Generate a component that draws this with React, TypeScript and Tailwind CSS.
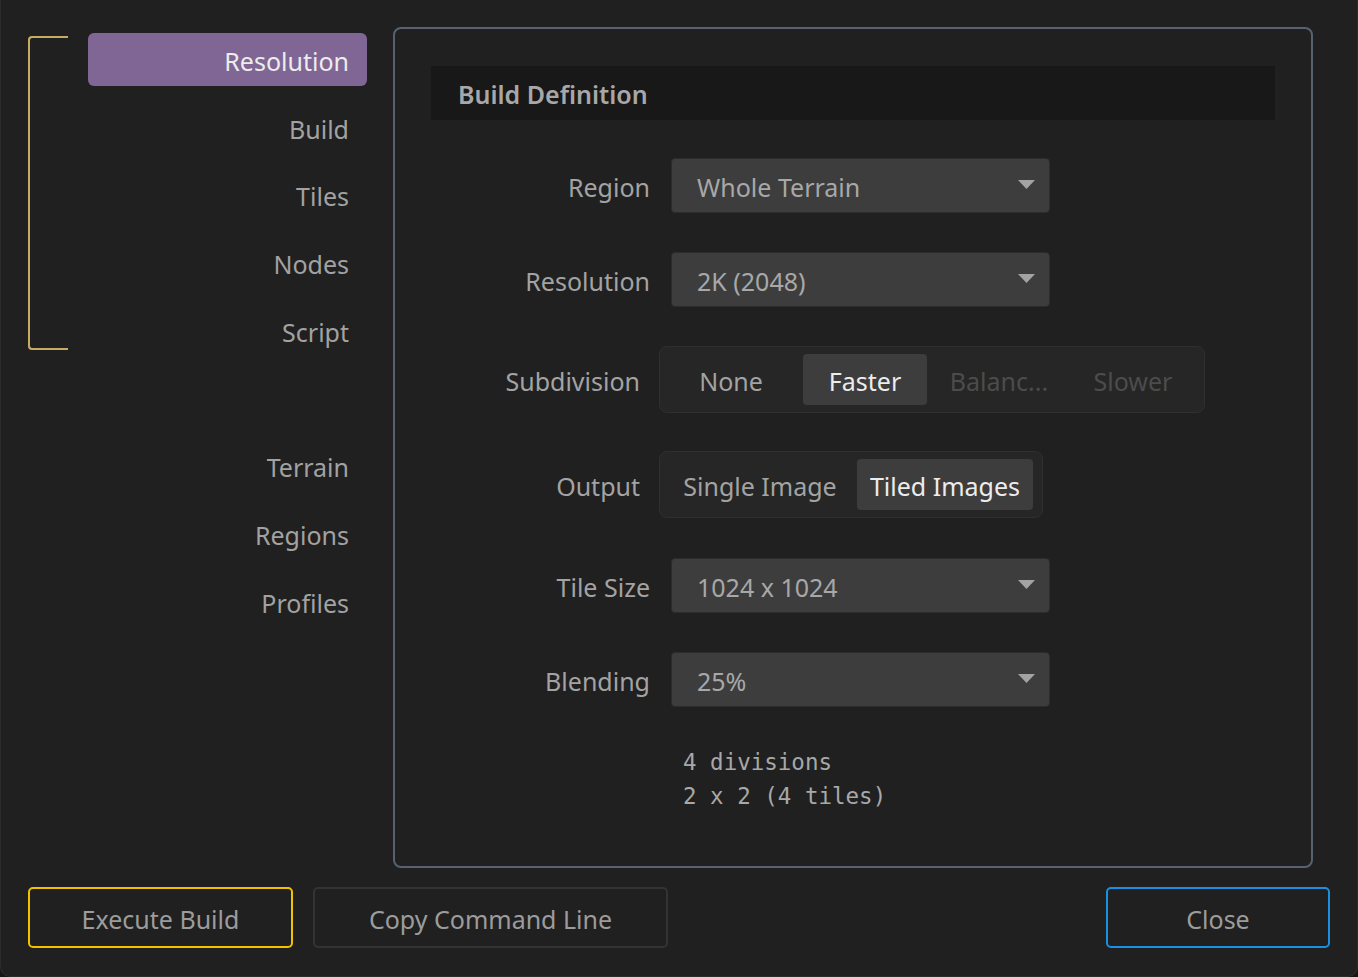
const ui = { fontFamily: '"Noto Sans", "Open Sans", sans-serif' };
const mono = { fontFamily: '"DejaVu Sans Mono", "Liberation Mono", monospace' };

const navTop = ["Resolution", "Build", "Tiles", "Nodes", "Script"];
const navBottom = ["Terrain", "Regions", "Profiles"];

function NavItem({ label, active }: { label: string; active?: boolean }) {
  return (
    <div
      className={
        "h-[53px] flex items-center justify-end pr-[18px] pt-[4px] rounded-[6px] text-[25px] " +
        (active ? "bg-[#7f6695] text-[#ececec]" : "text-[#a2a2a2]")
      }
    >
      {label}
    </div>
  );
}

function Caret() {
  return (
    <svg width="17" height="9" viewBox="0 0 17 9" className="mb-[3px]">
      <path d="M0 0 L17 0 L8.5 9 Z" fill="#a3a3a3" />
    </svg>
  );
}

function Dropdown({ value }: { value: string }) {
  return (
    <div className="w-[379px] h-[55px] bg-[#3d3d3d] border border-[#2c2c2c] rounded-[4px] flex items-center justify-between pl-[25px] pr-[14px] text-[25px] text-[#a8a8a8]">
      <span className="pt-[4px]">{value}</span>
      <Caret />
    </div>
  );
}

function Row({ label, children, seg }: { label: string; children: React.ReactNode; seg?: boolean }) {
  return (
    <div className="flex items-center">
      <div
        className={
          "text-right text-[25px] text-[#a3a3a3] pt-[4px] " +
          (seg ? "w-[209px] mr-[19px]" : "w-[219px] mr-[21px]")
        }
      >
        {label}
      </div>
      {children}
    </div>
  );
}

function Segmented({ options, selected, disabled = [], widths, gap }: { options: string[]; selected: number; disabled?: number[]; widths: number[]; gap: number }) {
  return (
    <div
      className="h-[67px] bg-[#262626] border border-[#2f2f2f] rounded-[8px] flex items-center px-[9px]"
      style={{ gap }}
    >
      {options.map((o, i) => (
        <div
          key={o}
          className={
            "h-[51px] flex items-center justify-center pt-[4px] rounded-[4px] text-[25px] " +
            (i === selected
              ? "bg-[#3d3d3d] text-[#ececec]"
              : disabled.includes(i)
              ? "text-[#4c4c4c]"
              : "text-[#a3a3a3]")
          }
          style={{ width: widths[i] }}
        >
          {o}
        </div>
      ))}
    </div>
  );
}

function Btn({ label, border, width }: { label: string; border: string; width: string }) {
  return (
    <div className={"h-[61px] rounded-[5px] flex items-center justify-center pt-[4px] text-[25px] text-[#9c9c9c] " + border + " " + width}>
      {label}
    </div>
  );
}

export default function App() {
  return (
    <div className="w-[1358px] h-[977px] bg-[#161616]" style={ui}>
      <div className="w-full h-full bg-[#202020] rounded-b-[10px] border-b border-x border-[#2c2c2c] flex flex-col pt-[27px] pl-[27px] pr-[27px]">
        <div className="flex">
          {/* sidebar */}
          <div className="w-[365px] flex">
            <div className="w-[40px] h-[314px] mt-[9px] border-l-2 border-t-2 border-b-2 border-[#c6ac62] rounded-l-[4px]" />
            <div className="ml-[20px] w-[279px] mt-[6px] flex flex-col gap-[14.75px]">
              {navTop.map((n, i) => (
                <NavItem key={n} label={n} active={i === 0} />
              ))}
              <div className="h-[53px]" />
              {navBottom.map((n) => (
                <NavItem key={n} label={n} />
              ))}
            </div>
          </div>

          {/* main panel */}
          <div className="w-[920px] h-[841px] border-2 border-[#56636f] rounded-[8px] px-[36px] pt-[37px]">
            <div className="h-[54px] bg-[#181818] flex items-center pl-[27px] pt-[4px] text-[25px] font-semibold text-[#a8a8a8]">
              Build Definition
            </div>
            <div className="flex flex-col mt-[38px]">
              <Row label="Region">
                <Dropdown value="Whole Terrain" />
              </Row>
              <div className="h-[39px]" />
              <Row label="Resolution">
                <Dropdown value="2K (2048)" />
              </Row>
              <div className="h-[39px]" />
              <Row label="Subdivision" seg>
                <Segmented
                  options={["None", "Faster", "Balanc...", "Slower"]}
                  selected={1}
                  disabled={[2, 3]}
                  widths={[124, 124, 124, 124]}
                  gap={10}
                />
              </Row>
              <div className="h-[38px]" />
              <Row label="Output" seg>
                <Segmented
                  options={["Single Image", "Tiled Images"]}
                  selected={1}
                  widths={[182, 176]}
                  gap={6}
                />
              </Row>
              <div className="h-[40px]" />
              <Row label="Tile Size">
                <Dropdown value="1024 x 1024" />
              </Row>
              <div className="h-[39px]" />
              <Row label="Blending">
                <Dropdown value="25%" />
              </Row>
              <div className="ml-[252px] mt-[38px] text-[22.5px] leading-[34px] text-[#a8a8a8]" style={mono}>
                <div>4 divisions</div>
                <div>2 x 2 (4 tiles)</div>
              </div>
            </div>
          </div>
        </div>

        {/* buttons */}
        <div className="flex mt-[19px] items-center">
          <Btn label="Execute Build" border="border-2 border-[#f2c200]" width="w-[265px]" />
          <Btn label="Copy Command Line" border="ml-[20px] border-2 border-[#333333]" width="w-[355px]" />
          <div className="flex-1" />
          <Btn label="Close" border="border-2 border-[#1c8fe3]" width="w-[224px]" />
        </div>
      </div>
    </div>
  );
}
